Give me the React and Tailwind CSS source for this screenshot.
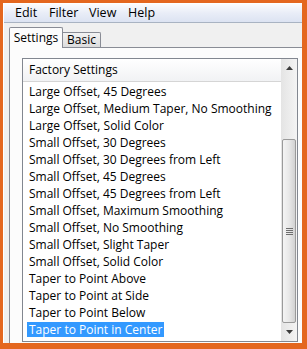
import React from 'react';

const items = [
  'Large Offset, 45 Degrees',
  'Large Offset, Medium Taper, No Smoothing',
  'Large Offset, Solid Color',
  'Small Offset, 30 Degrees',
  'Small Offset, 30 Degrees from Left',
  'Small Offset, 45 Degrees',
  'Small Offset, 45 Degrees from Left',
  'Small Offset, Maximum Smoothing',
  'Small Offset, No Smoothing',
  'Small Offset, Slight Taper',
  'Small Offset, Solid Color',
  'Taper to Point Above',
  'Taper to Point at Side',
  'Taper to Point Below',
  'Taper to Point in Center',
];

function Arrow({ up }) {
  return (
    <svg width="7" height="4" viewBox="0 0 7 4">
      {up ? <path d="M0 4 L3.5 0 L7 4 Z" fill="#3c3c3c" /> : <path d="M0 0 L3.5 4 L7 0 Z" fill="#3c3c3c" />}
    </svg>
  );
}

export default function App() {
  return (
    <div
      className="w-[307px] h-[349px] bg-[#e4671f] pt-[3px] pl-[3px] pr-[5px] pb-[6px] text-[12px] text-black"
      style={{ fontFamily: '"Open Sans", "Liberation Sans", sans-serif' }}
    >
      <div className="h-full flex flex-col bg-[#f0f0f0] border-l border-t border-white overflow-hidden">
        {/* menu bar */}
        <div className="h-[19px] shrink-0 flex items-center pl-[11px] text-[12.5px] bg-linear-to-b from-[#fbfcfe] via-[#e9edf7] to-[#dce3f2] border-b border-[#a9b3c2]">
          <span className="w-[34px]">Edit</span>
          <span className="w-[40px]">Filter</span>
          <span className="w-[39px]">View</span>
          <span>Help</span>
        </div>

        {/* tabs */}
        <div className="h-[24px] shrink-0 flex items-end pl-[5px] relative z-10">
          <div className="h-[21px] w-[54px] flex items-center justify-center bg-[#fcfcfc] border border-b-0 border-[#898c95] rounded-t-[2px] -mb-px">
            Settings
          </div>
          <div className="h-[15px] w-[38px] flex items-center justify-center bg-linear-to-b from-[#f3f3f3] to-[#dcdcdc] border border-l-0 border-b-0 border-[#898c95] rounded-tr-[2px]">
            Basic
          </div>
        </div>

        {/* panel */}
        <div className="flex-1 ml-[5px] border-l border-t border-[#898c95] bg-[#fcfcfc] pt-[10px] pl-[12px]">
          <div className="w-[276px] h-[284px] border border-[#828790] bg-white flex">
            <div className="flex-1 flex flex-col overflow-hidden">
              <div className="h-[23px] flex items-center pl-[6px] bg-linear-to-b from-white to-[#f1f2f4] border-b border-[#d5d5d5]">
                Factory Settings
              </div>
              <div className="pt-[1px]">
                {items.map((t, i) => (
                  <div key={i} className="h-[17px] flex items-center pl-[4px] whitespace-nowrap">
                    <span
                      className={
                        i === items.length - 1
                          ? 'h-[15px] flex items-center px-[2px] bg-[#3399ff] text-white'
                          : 'h-[15px] flex items-center px-[2px]'
                      }
                    >
                      {t}
                    </span>
                  </div>
                ))}
              </div>
            </div>

            {/* scrollbar */}
            <div className="w-[16px] shrink-0 flex flex-col bg-linear-to-r from-[#e4e4e4] to-[#f4f4f4]">
              <div className="h-[17px] flex items-center justify-center">
                <Arrow up />
              </div>
              <div className="h-[63px]" />
              <div className="h-[184px] mx-[1px] rounded-[2px] border border-[#9a9a9a] bg-linear-to-r from-[#f4f4f4] via-[#e8e8e8] to-[#d2d2d2] flex flex-col items-center justify-center gap-[1px]">
                <div className="w-[7px] h-[1px] bg-[#6e6e6e]" />
                <div className="w-[7px] h-[1px] bg-[#6e6e6e]" />
                <div className="w-[7px] h-[1px] bg-[#6e6e6e]" />
                <div className="w-[7px] h-[1px] bg-[#6e6e6e]" />
              </div>
              <div className="flex-1 flex items-center justify-center">
                <Arrow />
              </div>
            </div>
          </div>
        </div>
      </div>
    </div>
  );
}
